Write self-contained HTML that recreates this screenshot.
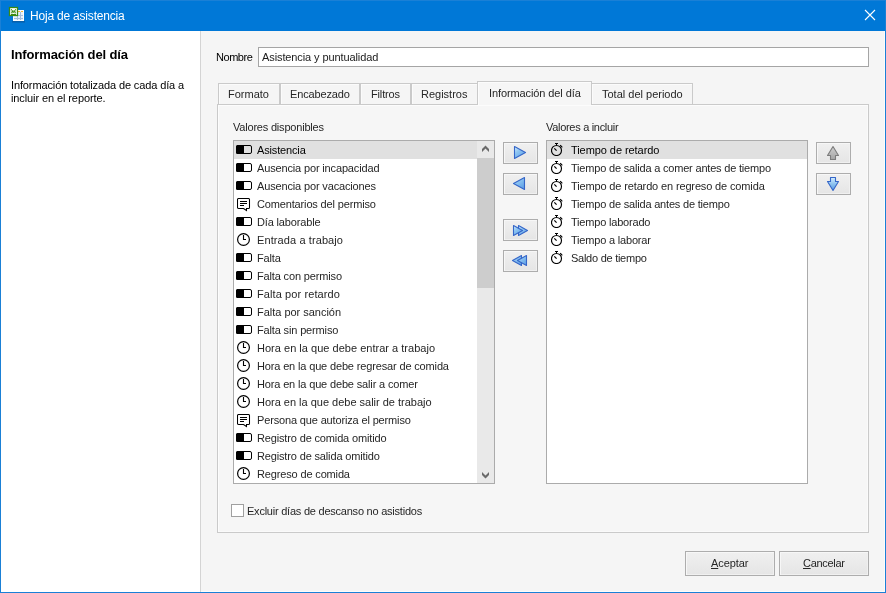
<!DOCTYPE html>
<html><head><meta charset="utf-8"><style>
html,body{margin:0;padding:0;width:886px;height:593px;overflow:hidden;background:#f5f5f5;}
#w{position:absolute;left:0;top:0;width:886px;height:593px;overflow:hidden;will-change:transform;}
.a{position:absolute;}
.t{position:absolute;white-space:pre;font-family:'Liberation Sans', sans-serif;}
svg{display:block;}
</style></head><body><div id="w">
<div class="a" style="left:0px;top:0px;width:886px;height:593px;background:#1a80d6;"></div>
<div class="a" style="left:1px;top:1px;width:884px;height:30px;background:#0078d7;"></div>
<div class="a" style="left:1px;top:31px;width:199px;height:561px;background:#fff;"></div>
<div class="a" style="left:200px;top:31px;width:1px;height:561px;background:#d4d4d4;"></div>
<div class="a" style="left:201px;top:31px;width:684px;height:561px;background:#f5f5f5;"></div>
<div class="a" style="left:884px;top:31px;width:1px;height:561px;background:#fcfcfc;"></div>
<div class="a" style="left:201px;top:591px;width:684px;height:1px;background:#fcfcfc;"></div>
<svg class="a" style="left:6px;top:4px" width="22" height="22" viewBox="6 4 22 22">
<rect x="12" y="21" width="13" height="1.5" fill="#0b4f8c" opacity="0.6"/>
<rect x="13" y="10" width="11" height="11" fill="#fbfdff"/>
<rect x="14" y="11" width="9" height="9" fill="#e6f1fb"/>
<rect x="18" y="11" width="2" height="1" fill="#f7b733"/><rect x="21" y="11" width="2" height="1" fill="#f7b733"/>
<path d="M14 15.5H23M14 18.5H23M17.5 12V20M20.5 12V20" stroke="#a6bfdc" stroke-width="1"/>
<rect x="9.5" y="7.5" width="8" height="8" fill="#fff" stroke="#3b8a12" stroke-width="1.3"/>
<path d="M11 9.5L16 13.5M16 9.5L11 13.5M11.5 12H15.5" stroke="#3b8a12" stroke-width="1.4" stroke-dasharray="1 0.6"/>
<path d="M11 14.5H16" stroke="#3b8a12" stroke-width="1"/>
</svg>
<div class="t" style="left:30px;top:9px;font-size:12px;line-height:14px;color:#fff;letter-spacing:-0.2px;">Hoja de asistencia</div>
<svg class="a" style="left:864px;top:9px" width="12" height="12" viewBox="0 0 12 12"><path d="M1 1L11 11M11 1L1 11" stroke="#fff" stroke-width="1.1"/></svg>
<div class="t" style="left:11px;top:47px;font-size:13px;line-height:15px;color:#000;font-weight:bold;letter-spacing:-0.12px;">Información del día</div>
<div class="t" style="left:11px;top:79px;font-size:11px;line-height:13px;color:#000;letter-spacing:-0.12px;">Información totalizada de cada día a</div>
<div class="t" style="left:11px;top:92px;font-size:11px;line-height:13px;color:#000;letter-spacing:-0.1px;">incluir en el reporte.</div>
<div class="t" style="left:216px;top:51px;font-size:11px;line-height:12px;color:#000;letter-spacing:-0.45px;">Nombre</div>
<div class="a" style="left:258px;top:47px;width:611px;height:20px;background:#fff;border:1px solid #a5a5a5;box-sizing:border-box;"></div>
<div class="t" style="left:262px;top:51px;font-size:11px;line-height:12px;color:#1a1a1a;letter-spacing:-0.1px;">Asistencia y puntualidad</div>
<div class="a" style="left:217px;top:104px;width:652px;height:429px;background:#f6f6f6;border:1px solid #cacaca;box-sizing:border-box;box-shadow:inset 1px 1px 0 #fcfcfc,inset -1px -1px 0 #fafafa;"></div>
<div class="a" style="left:218px;top:83px;width:62px;height:22px;background:#f5f5f5;border:1px solid #cacaca;box-sizing:border-box;box-shadow:inset 1px 1px 0 #fbfbfb;"></div>
<div class="t" style="left:228px;top:88px;font-size:11px;line-height:12px;color:#262626;">Formato</div>
<div class="a" style="left:280px;top:83px;width:80px;height:22px;background:#f5f5f5;border:1px solid #cacaca;box-sizing:border-box;box-shadow:inset 1px 1px 0 #fbfbfb;"></div>
<div class="t" style="left:290px;top:88px;font-size:11px;line-height:12px;color:#262626;letter-spacing:-0.15px;">Encabezado</div>
<div class="a" style="left:360px;top:83px;width:51px;height:22px;background:#f5f5f5;border:1px solid #cacaca;box-sizing:border-box;box-shadow:inset 1px 1px 0 #fbfbfb;"></div>
<div class="t" style="left:371px;top:88px;font-size:11px;line-height:12px;color:#262626;letter-spacing:-0.15px;">Filtros</div>
<div class="a" style="left:411px;top:83px;width:67px;height:22px;background:#f5f5f5;border:1px solid #cacaca;box-sizing:border-box;box-shadow:inset 1px 1px 0 #fbfbfb;"></div>
<div class="t" style="left:421px;top:88px;font-size:11px;line-height:12px;color:#262626;">Registros</div>
<div class="a" style="left:592px;top:83px;width:101px;height:22px;background:#f5f5f5;border:1px solid #cacaca;box-sizing:border-box;box-shadow:inset 1px 1px 0 #fbfbfb;border-left:none;"></div>
<div class="t" style="left:602px;top:88px;font-size:11px;line-height:12px;color:#262626;">Total del periodo</div>
<div class="a" style="left:477px;top:81px;width:115px;height:24px;background:#f6f6f6;border:1px solid #cacaca;border-bottom:none;box-sizing:border-box;box-shadow:inset 1px 1px 0 #fcfcfc;"></div>
<div class="t" style="left:489px;top:87px;font-size:11px;line-height:12px;color:#262626;letter-spacing:-0.1px;">Información del día</div>
<div class="t" style="left:233px;top:121px;font-size:11px;line-height:12px;color:#262626;letter-spacing:-0.2px;">Valores disponibles</div>
<div class="t" style="left:546px;top:121px;font-size:11px;line-height:12px;color:#262626;letter-spacing:-0.3px;">Valores a incluir</div>
<div class="a" style="left:233px;top:140px;width:262px;height:344px;background:#fff;border:1px solid #ababab;box-sizing:border-box;"></div>
<div class="a" style="left:234px;top:141px;width:243px;height:18px;background:#e0e0e0;"></div>
<svg class="a" style="left:236px;top:145px" width="16" height="9" viewBox="0 0 16 9"><rect x="0.5" y="0.5" width="15" height="8" rx="1.5" fill="none" stroke="#000"/><path d="M1.5 0H8V9H1.5Q0 9 0 7.5V1.5Q0 0 1.5 0Z" fill="#000"/></svg>
<div class="t" style="left:257px;top:144px;font-size:11px;line-height:12px;color:#000;letter-spacing:-0.15px;">Asistencia</div>
<svg class="a" style="left:236px;top:163px" width="16" height="9" viewBox="0 0 16 9"><rect x="0.5" y="0.5" width="15" height="8" rx="1.5" fill="none" stroke="#000"/><path d="M1.5 0H8V9H1.5Q0 9 0 7.5V1.5Q0 0 1.5 0Z" fill="#000"/></svg>
<div class="t" style="left:257px;top:162px;font-size:11px;line-height:12px;color:#262626;letter-spacing:-0.15px;">Ausencia por incapacidad</div>
<svg class="a" style="left:236px;top:181px" width="16" height="9" viewBox="0 0 16 9"><rect x="0.5" y="0.5" width="15" height="8" rx="1.5" fill="none" stroke="#000"/><path d="M1.5 0H8V9H1.5Q0 9 0 7.5V1.5Q0 0 1.5 0Z" fill="#000"/></svg>
<div class="t" style="left:257px;top:180px;font-size:11px;line-height:12px;color:#262626;letter-spacing:-0.15px;">Ausencia por vacaciones</div>
<svg class="a" style="left:237px;top:198px" width="14" height="14" viewBox="0 0 14 14"><path d="M1.6 0.5H11.4Q12.5 0.5 12.5 1.6V9.4Q12.5 10.5 11.4 10.5H9.5V12.5L6.5 10.5H1.6Q0.5 10.5 0.5 9.4V1.6Q0.5 0.5 1.6 0.5Z" fill="none" stroke="#000" stroke-width="1.05"/><path d="M3 3.5H10M3 5.5H10M3 7.5H7" stroke="#000"/></svg>
<div class="t" style="left:257px;top:198px;font-size:11px;line-height:12px;color:#262626;letter-spacing:-0.15px;">Comentarios del permiso</div>
<svg class="a" style="left:236px;top:217px" width="16" height="9" viewBox="0 0 16 9"><rect x="0.5" y="0.5" width="15" height="8" rx="1.5" fill="none" stroke="#000"/><path d="M1.5 0H8V9H1.5Q0 9 0 7.5V1.5Q0 0 1.5 0Z" fill="#000"/></svg>
<div class="t" style="left:257px;top:216px;font-size:11px;line-height:12px;color:#262626;letter-spacing:-0.15px;">Día laborable</div>
<svg class="a" style="left:237px;top:233px" width="13" height="13" viewBox="0 0 13 13"><circle cx="6.5" cy="6.5" r="5.9" fill="none" stroke="#000" stroke-width="1.2"/><path d="M6.5 2V7M6 6.5H9" stroke="#000" stroke-width="1.1"/></svg>
<div class="t" style="left:257px;top:234px;font-size:11px;line-height:12px;color:#262626;letter-spacing:0.1px;">Entrada a trabajo</div>
<svg class="a" style="left:236px;top:253px" width="16" height="9" viewBox="0 0 16 9"><rect x="0.5" y="0.5" width="15" height="8" rx="1.5" fill="none" stroke="#000"/><path d="M1.5 0H8V9H1.5Q0 9 0 7.5V1.5Q0 0 1.5 0Z" fill="#000"/></svg>
<div class="t" style="left:257px;top:252px;font-size:11px;line-height:12px;color:#262626;letter-spacing:-0.15px;">Falta</div>
<svg class="a" style="left:236px;top:271px" width="16" height="9" viewBox="0 0 16 9"><rect x="0.5" y="0.5" width="15" height="8" rx="1.5" fill="none" stroke="#000"/><path d="M1.5 0H8V9H1.5Q0 9 0 7.5V1.5Q0 0 1.5 0Z" fill="#000"/></svg>
<div class="t" style="left:257px;top:270px;font-size:11px;line-height:12px;color:#262626;letter-spacing:-0.15px;">Falta con permiso</div>
<svg class="a" style="left:236px;top:289px" width="16" height="9" viewBox="0 0 16 9"><rect x="0.5" y="0.5" width="15" height="8" rx="1.5" fill="none" stroke="#000"/><path d="M1.5 0H8V9H1.5Q0 9 0 7.5V1.5Q0 0 1.5 0Z" fill="#000"/></svg>
<div class="t" style="left:257px;top:288px;font-size:11px;line-height:12px;color:#262626;letter-spacing:0.1px;">Falta por retardo</div>
<svg class="a" style="left:236px;top:307px" width="16" height="9" viewBox="0 0 16 9"><rect x="0.5" y="0.5" width="15" height="8" rx="1.5" fill="none" stroke="#000"/><path d="M1.5 0H8V9H1.5Q0 9 0 7.5V1.5Q0 0 1.5 0Z" fill="#000"/></svg>
<div class="t" style="left:257px;top:306px;font-size:11px;line-height:12px;color:#262626;letter-spacing:-0.02px;">Falta por sanción</div>
<svg class="a" style="left:236px;top:325px" width="16" height="9" viewBox="0 0 16 9"><rect x="0.5" y="0.5" width="15" height="8" rx="1.5" fill="none" stroke="#000"/><path d="M1.5 0H8V9H1.5Q0 9 0 7.5V1.5Q0 0 1.5 0Z" fill="#000"/></svg>
<div class="t" style="left:257px;top:324px;font-size:11px;line-height:12px;color:#262626;letter-spacing:-0.15px;">Falta sin permiso</div>
<svg class="a" style="left:237px;top:341px" width="13" height="13" viewBox="0 0 13 13"><circle cx="6.5" cy="6.5" r="5.9" fill="none" stroke="#000" stroke-width="1.2"/><path d="M6.5 2V7M6 6.5H9" stroke="#000" stroke-width="1.1"/></svg>
<div class="t" style="left:257px;top:342px;font-size:11px;line-height:12px;color:#262626;letter-spacing:0.02px;">Hora en la que debe entrar a trabajo</div>
<svg class="a" style="left:237px;top:359px" width="13" height="13" viewBox="0 0 13 13"><circle cx="6.5" cy="6.5" r="5.9" fill="none" stroke="#000" stroke-width="1.2"/><path d="M6.5 2V7M6 6.5H9" stroke="#000" stroke-width="1.1"/></svg>
<div class="t" style="left:257px;top:360px;font-size:11px;line-height:12px;color:#262626;letter-spacing:-0.15px;">Hora en la que debe regresar de comida</div>
<svg class="a" style="left:237px;top:377px" width="13" height="13" viewBox="0 0 13 13"><circle cx="6.5" cy="6.5" r="5.9" fill="none" stroke="#000" stroke-width="1.2"/><path d="M6.5 2V7M6 6.5H9" stroke="#000" stroke-width="1.1"/></svg>
<div class="t" style="left:257px;top:378px;font-size:11px;line-height:12px;color:#262626;letter-spacing:-0.15px;">Hora en la que debe salir a comer</div>
<svg class="a" style="left:237px;top:395px" width="13" height="13" viewBox="0 0 13 13"><circle cx="6.5" cy="6.5" r="5.9" fill="none" stroke="#000" stroke-width="1.2"/><path d="M6.5 2V7M6 6.5H9" stroke="#000" stroke-width="1.1"/></svg>
<div class="t" style="left:257px;top:396px;font-size:11px;line-height:12px;color:#262626;letter-spacing:-0.01px;">Hora en la que debe salir de trabajo</div>
<svg class="a" style="left:237px;top:414px" width="14" height="14" viewBox="0 0 14 14"><path d="M1.6 0.5H11.4Q12.5 0.5 12.5 1.6V9.4Q12.5 10.5 11.4 10.5H9.5V12.5L6.5 10.5H1.6Q0.5 10.5 0.5 9.4V1.6Q0.5 0.5 1.6 0.5Z" fill="none" stroke="#000" stroke-width="1.05"/><path d="M3 3.5H10M3 5.5H10M3 7.5H7" stroke="#000"/></svg>
<div class="t" style="left:257px;top:414px;font-size:11px;line-height:12px;color:#262626;letter-spacing:-0.15px;">Persona que autoriza el permiso</div>
<svg class="a" style="left:236px;top:433px" width="16" height="9" viewBox="0 0 16 9"><rect x="0.5" y="0.5" width="15" height="8" rx="1.5" fill="none" stroke="#000"/><path d="M1.5 0H8V9H1.5Q0 9 0 7.5V1.5Q0 0 1.5 0Z" fill="#000"/></svg>
<div class="t" style="left:257px;top:432px;font-size:11px;line-height:12px;color:#262626;letter-spacing:-0.15px;">Registro de comida omitido</div>
<svg class="a" style="left:236px;top:451px" width="16" height="9" viewBox="0 0 16 9"><rect x="0.5" y="0.5" width="15" height="8" rx="1.5" fill="none" stroke="#000"/><path d="M1.5 0H8V9H1.5Q0 9 0 7.5V1.5Q0 0 1.5 0Z" fill="#000"/></svg>
<div class="t" style="left:257px;top:450px;font-size:11px;line-height:12px;color:#262626;letter-spacing:-0.15px;">Registro de salida omitido</div>
<svg class="a" style="left:237px;top:467px" width="13" height="13" viewBox="0 0 13 13"><circle cx="6.5" cy="6.5" r="5.9" fill="none" stroke="#000" stroke-width="1.2"/><path d="M6.5 2V7M6 6.5H9" stroke="#000" stroke-width="1.1"/></svg>
<div class="t" style="left:257px;top:468px;font-size:11px;line-height:12px;color:#262626;letter-spacing:-0.15px;">Regreso de comida</div>
<div class="a" style="left:477px;top:141px;width:17px;height:342px;background:#e9e9e9;"></div>
<div class="a" style="left:477px;top:158px;width:17px;height:130px;background:#cdcdcd;"></div>
<svg class="a" style="left:480px;top:143px" width="11" height="11" viewBox="480 143 11 11"><path d="M482 149L485.5 145.5L489 149V152L485.5 148.5L482 152Z" fill="#6a6a6a"/></svg>
<svg class="a" style="left:480px;top:469px" width="11" height="11" viewBox="480 469 11 11"><path d="M482 472L485.5 475.5L489 472V475L485.5 478.5L482 475Z" fill="#6a6a6a"/></svg>
<div class="a" style="left:546px;top:140px;width:262px;height:344px;background:#fff;border:1px solid #ababab;box-sizing:border-box;"></div>
<div class="a" style="left:547px;top:141px;width:260px;height:18px;background:#e0e0e0;"></div>
<svg class="a" style="left:551px;top:143px" width="13" height="13" viewBox="0 0 13 13"><circle cx="5.5" cy="7.5" r="5" fill="none" stroke="#000" stroke-width="1.15"/><path d="M4 0.5H7M5.5 1V2.5" stroke="#000"/><path d="M9.2 2.2L11.3 4.3" stroke="#000" stroke-width="1.2"/><path d="M3.3 5.3L5.6 7.6" stroke="#000" stroke-width="1.2"/></svg>
<div class="t" style="left:571px;top:144px;font-size:11px;line-height:12px;color:#000;letter-spacing:-0.065px;">Tiempo de retardo</div>
<svg class="a" style="left:551px;top:161px" width="13" height="13" viewBox="0 0 13 13"><circle cx="5.5" cy="7.5" r="5" fill="none" stroke="#000" stroke-width="1.15"/><path d="M4 0.5H7M5.5 1V2.5" stroke="#000"/><path d="M9.2 2.2L11.3 4.3" stroke="#000" stroke-width="1.2"/><path d="M3.3 5.3L5.6 7.6" stroke="#000" stroke-width="1.2"/></svg>
<div class="t" style="left:571px;top:162px;font-size:11px;line-height:12px;color:#262626;letter-spacing:-0.19px;">Tiempo de salida a comer antes de tiempo</div>
<svg class="a" style="left:551px;top:179px" width="13" height="13" viewBox="0 0 13 13"><circle cx="5.5" cy="7.5" r="5" fill="none" stroke="#000" stroke-width="1.15"/><path d="M4 0.5H7M5.5 1V2.5" stroke="#000"/><path d="M9.2 2.2L11.3 4.3" stroke="#000" stroke-width="1.2"/><path d="M3.3 5.3L5.6 7.6" stroke="#000" stroke-width="1.2"/></svg>
<div class="t" style="left:571px;top:180px;font-size:11px;line-height:12px;color:#262626;letter-spacing:-0.14px;">Tiempo de retardo en regreso de comida</div>
<svg class="a" style="left:551px;top:197px" width="13" height="13" viewBox="0 0 13 13"><circle cx="5.5" cy="7.5" r="5" fill="none" stroke="#000" stroke-width="1.15"/><path d="M4 0.5H7M5.5 1V2.5" stroke="#000"/><path d="M9.2 2.2L11.3 4.3" stroke="#000" stroke-width="1.2"/><path d="M3.3 5.3L5.6 7.6" stroke="#000" stroke-width="1.2"/></svg>
<div class="t" style="left:571px;top:198px;font-size:11px;line-height:12px;color:#262626;letter-spacing:-0.19px;">Tiempo de salida antes de tiempo</div>
<svg class="a" style="left:551px;top:215px" width="13" height="13" viewBox="0 0 13 13"><circle cx="5.5" cy="7.5" r="5" fill="none" stroke="#000" stroke-width="1.15"/><path d="M4 0.5H7M5.5 1V2.5" stroke="#000"/><path d="M9.2 2.2L11.3 4.3" stroke="#000" stroke-width="1.2"/><path d="M3.3 5.3L5.6 7.6" stroke="#000" stroke-width="1.2"/></svg>
<div class="t" style="left:571px;top:216px;font-size:11px;line-height:12px;color:#262626;letter-spacing:-0.19px;">Tiempo laborado</div>
<svg class="a" style="left:551px;top:233px" width="13" height="13" viewBox="0 0 13 13"><circle cx="5.5" cy="7.5" r="5" fill="none" stroke="#000" stroke-width="1.15"/><path d="M4 0.5H7M5.5 1V2.5" stroke="#000"/><path d="M9.2 2.2L11.3 4.3" stroke="#000" stroke-width="1.2"/><path d="M3.3 5.3L5.6 7.6" stroke="#000" stroke-width="1.2"/></svg>
<div class="t" style="left:571px;top:234px;font-size:11px;line-height:12px;color:#262626;letter-spacing:-0.19px;">Tiempo a laborar</div>
<svg class="a" style="left:551px;top:251px" width="13" height="13" viewBox="0 0 13 13"><circle cx="5.5" cy="7.5" r="5" fill="none" stroke="#000" stroke-width="1.15"/><path d="M4 0.5H7M5.5 1V2.5" stroke="#000"/><path d="M9.2 2.2L11.3 4.3" stroke="#000" stroke-width="1.2"/><path d="M3.3 5.3L5.6 7.6" stroke="#000" stroke-width="1.2"/></svg>
<div class="t" style="left:571px;top:252px;font-size:11px;line-height:12px;color:#262626;letter-spacing:-0.26px;">Saldo de tiempo</div>
<div class="a" style="left:503px;top:142px;width:35px;height:22px;background:linear-gradient(#f0f0f0,#e5e5e5);border:1px solid #adadad;box-sizing:border-box;box-shadow:inset 1px 1px 0 #f7f7f7,inset -1px -1px 0 #f0f0f0;"></div>
<div class="a" style="left:503px;top:173px;width:35px;height:22px;background:linear-gradient(#f0f0f0,#e5e5e5);border:1px solid #adadad;box-sizing:border-box;box-shadow:inset 1px 1px 0 #f7f7f7,inset -1px -1px 0 #f0f0f0;"></div>
<div class="a" style="left:503px;top:219px;width:35px;height:22px;background:linear-gradient(#f0f0f0,#e5e5e5);border:1px solid #adadad;box-sizing:border-box;box-shadow:inset 1px 1px 0 #f7f7f7,inset -1px -1px 0 #f0f0f0;"></div>
<div class="a" style="left:503px;top:250px;width:35px;height:22px;background:linear-gradient(#f0f0f0,#e5e5e5);border:1px solid #adadad;box-sizing:border-box;box-shadow:inset 1px 1px 0 #f7f7f7,inset -1px -1px 0 #f0f0f0;"></div>
<div class="a" style="left:816px;top:142px;width:35px;height:22px;background:linear-gradient(#f0f0f0,#e5e5e5);border:1px solid #adadad;box-sizing:border-box;box-shadow:inset 1px 1px 0 #f7f7f7,inset -1px -1px 0 #f0f0f0;"></div>
<div class="a" style="left:816px;top:173px;width:35px;height:22px;background:linear-gradient(#f0f0f0,#e5e5e5);border:1px solid #adadad;box-sizing:border-box;box-shadow:inset 1px 1px 0 #f7f7f7,inset -1px -1px 0 #f0f0f0;"></div>
<svg class="a" style="left:508px;top:140px" width="24" height="24" viewBox="508 140 24 24"><defs><linearGradient id="g1" x1="0" y1="0" x2="0.8" y2="1"><stop offset="0" stop-color="#d8f0ff"/><stop offset="0.4" stop-color="#8fc6f2"/><stop offset="1" stop-color="#5d9fe6"/></linearGradient></defs><path d="M514.5 146.5L525.5 152.5L514.5 158.5Z" fill="url(#g1)" stroke="#3566c8" stroke-width="1.1" stroke-linejoin="round"/></svg>
<svg class="a" style="left:508px;top:171px" width="24" height="24" viewBox="508 171 24 24"><defs><linearGradient id="g2" x1="0" y1="0" x2="0.8" y2="1"><stop offset="0" stop-color="#d8f0ff"/><stop offset="0.4" stop-color="#8fc6f2"/><stop offset="1" stop-color="#5d9fe6"/></linearGradient></defs><path d="M524.5 177.5L513.5 183.5L524.5 189.5Z" fill="url(#g2)" stroke="#3566c8" stroke-width="1.1" stroke-linejoin="round"/></svg>
<svg class="a" style="left:508px;top:218px" width="24" height="24" viewBox="508 218 24 24"><defs><linearGradient id="g3" x1="0" y1="0" x2="0.8" y2="1"><stop offset="0" stop-color="#d8f0ff"/><stop offset="0.4" stop-color="#8fc6f2"/><stop offset="1" stop-color="#5d9fe6"/></linearGradient></defs><path d="M518.5 225.5L527.5 230.5L518.5 235.5Z" fill="url(#g3)" stroke="#3566c8" stroke-width="1.1" stroke-linejoin="round"/><path d="M513.5 225.5L522.5 230.5L513.5 235.5Z" fill="url(#g3)" stroke="#3566c8" stroke-width="1.1" stroke-linejoin="round"/></svg>
<svg class="a" style="left:508px;top:249px" width="24" height="24" viewBox="508 249 24 24"><defs><linearGradient id="g4" x1="0" y1="0" x2="0.8" y2="1"><stop offset="0" stop-color="#d8f0ff"/><stop offset="0.4" stop-color="#8fc6f2"/><stop offset="1" stop-color="#5d9fe6"/></linearGradient></defs><path d="M521.5 255.5L512.5 260.5L521.5 265.5Z" fill="url(#g4)" stroke="#3566c8" stroke-width="1.1" stroke-linejoin="round"/><path d="M526.5 255.5L517.5 260.5L526.5 265.5Z" fill="url(#g4)" stroke="#3566c8" stroke-width="1.1" stroke-linejoin="round"/></svg>
<svg class="a" style="left:822px;top:140px" width="24" height="24" viewBox="822 140 24 24"><defs><linearGradient id="gu" x1="0" y1="0" x2="0" y2="1"><stop offset="0" stop-color="#d0d0d0"/><stop offset="1" stop-color="#a4a4a4"/></linearGradient></defs><path d="M833 146.5L838.5 155.5H835.5V159.5H830.5V155.5H827.5Z" fill="url(#gu)" stroke="#7c7c7c" stroke-width="1.1" stroke-linejoin="round"/></svg>
<svg class="a" style="left:822px;top:171px" width="24" height="24" viewBox="822 171 24 24"><defs><linearGradient id="gd" x1="0" y1="0" x2="0" y2="1"><stop offset="0" stop-color="#d6efff"/><stop offset="0.5" stop-color="#8cc2ef"/><stop offset="1" stop-color="#5a9ae2"/></linearGradient></defs><path d="M830.5 177.5H835.5V181.5H838.5L833 190.5L827.5 181.5H830.5Z" fill="url(#gd)" stroke="#3566c8" stroke-width="1.1" stroke-linejoin="round"/></svg>
<div class="a" style="left:231px;top:504px;width:13px;height:13px;background:#fff;border:1px solid #a0a0a0;box-sizing:border-box;"></div>
<div class="t" style="left:247px;top:505px;font-size:11px;line-height:12px;color:#262626;letter-spacing:-0.23px;">Excluir días de descanso no asistidos</div>
<div class="a" style="left:685px;top:551px;width:90px;height:25px;background:linear-gradient(#f0f0f0,#e5e5e5);border:1px solid #adadad;box-sizing:border-box;box-shadow:inset 1px 1px 0 #f7f7f7,inset -1px -1px 0 #f0f0f0;"></div>
<div class="a" style="left:779px;top:551px;width:90px;height:25px;background:linear-gradient(#f0f0f0,#e5e5e5);border:1px solid #adadad;box-sizing:border-box;box-shadow:inset 1px 1px 0 #f7f7f7,inset -1px -1px 0 #f0f0f0;"></div>
<div class="t" style="left:711px;top:557px;font-size:11px;line-height:12px;color:#262626;letter-spacing:-0.1px;"><u>A</u>ceptar</div>
<div class="t" style="left:803px;top:557px;font-size:11px;line-height:12px;color:#262626;letter-spacing:-0.3px;"><u>C</u>ancelar</div>
</div></body></html>
